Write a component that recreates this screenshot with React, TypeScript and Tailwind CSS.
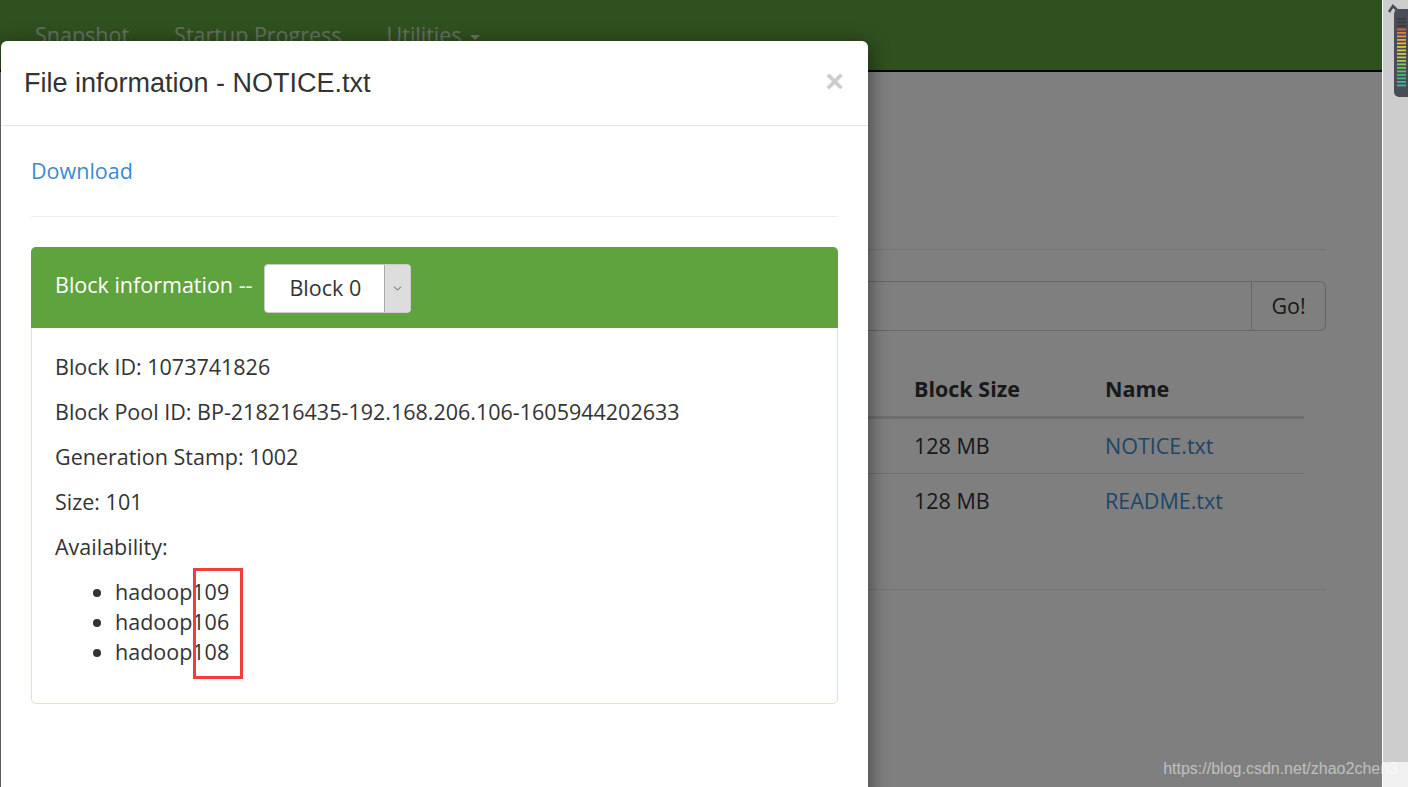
import { ChevronDown } from "lucide-react";

const bodyFont = { fontFamily: '"Open Sans", "Noto Sans", sans-serif' };
const arial = { fontFamily: '"Liberation Sans", Arial, sans-serif' };

function MeterWidget() {
  const colors = [
    "#3a3d45", "#3a3d45", "#3a3d45", "#e0643c", "#e57b3a", "#e8953a", "#e9a83a",
    "#e7b93c", "#e3c43f", "#d8cb42", "#c9cd45", "#b5cd4a", "#9fca50", "#89c657",
    "#72c25f", "#5dbd6a", "#4bb979", "#41b689", "#3eb398", "#3fb1a6",
  ];
  return (
    <svg width="26" height="100" viewBox="0 0 26 100" className="absolute left-0 top-0">
      <path d="M6 12 L10 6 L14 10" stroke="#4a4d57" strokeWidth="2.5" fill="none" />
      <rect x="11" y="9" width="20" height="88" rx="5" fill="#4a4d57" />
      {colors.map((c, i) => (
        <rect key={i} x="14" y={18 + i * 3.5} width="9" height="1.8" fill={c} />
      ))}
    </svg>
  );
}

function BackgroundPage() {
  return (
    <div className="relative flex-1 bg-white" style={bodyFont}>
      <div className="h-[72px] bg-[#5ea03f] border-b-2 border-black flex items-center gap-[45px] pl-[35px] text-[21.5px] text-white/70">
        <span>Snapshot</span>
        <span>Startup Progress</span>
        <span className="flex items-center gap-2">
          Utilities
          <span className="inline-block w-0 h-0 border-x-[5px] border-x-transparent border-t-[5px] border-t-white/70 mt-1" />
        </span>
      </div>
      <div className="ml-[56px] w-[1270px]">
        <div className="h-[178px] border-b border-[#e5e5e5]" />
        <div className="mt-[31px] flex h-[50px]">
          <div className="flex-1 border border-[#ccc] rounded-l-md" />
          <button className="w-[74px] border border-l-0 border-[#ccc] rounded-r-md text-[21.5px] text-[#333]">Go!</button>
        </div>
        <div className="w-[1248px] mt-[38px] text-[21.5px] text-[#333]">
          <div className="flex h-[50px] items-center pb-[6px] font-bold border-b-[3px] border-[#ddd]">
            <div className="w-[858px]" />
            <div className="w-[191px]">Block Size</div>
            <div>Name</div>
          </div>
          <div className="flex h-[55px] items-center border-b border-[#ddd]">
            <div className="w-[858px]" />
            <div className="w-[191px]">128 MB</div>
            <div className="text-[#3d8cd0]">NOTICE.txt</div>
          </div>
          <div className="flex h-[55px] items-center">
            <div className="w-[858px]" />
            <div className="w-[191px]">128 MB</div>
            <div className="text-[#3d8cd0]">README.txt</div>
          </div>
        </div>
        <div className="mt-[60px] border-t border-[#e5e5e5]" />
      </div>
      <div className="absolute inset-0 bg-black/50" />
    </div>
  );
}

function Modal() {
  return (
    <div
      className="absolute left-[1px] top-[41px] w-[867px] h-[800px] bg-white rounded-t-[6px] shadow-[0_5px_20px_rgba(0,0,0,0.55)]"
      style={bodyFont}
    >
      <div className="h-[85px] border-b border-[#e5e5e5] flex items-center justify-between pl-[23px] pr-[24px]">
        <h4 className="text-[27px] text-[#333] leading-none" style={arial}>
          File information - NOTICE.txt
        </h4>
        <span className="text-[32px] font-bold text-[#cccccc] leading-none pb-[4px]" style={arial}>
          ×
        </span>
      </div>
      <div className="px-[30px] pt-[30px]">
        <a className="block text-[21.5px] text-[#3a8ad0] leading-[30px]">Download</a>
        <div className="mt-[30px] border-t border-[#eee]" />
        <div className="mt-[30px] rounded-[5px] border border-[#d6e9c6]">
          <div className="h-[81px] -mx-px -mt-px bg-[#5fa33e] rounded-t-[5px] flex items-center pl-[24px] text-[21.5px] text-white">
            <span className="pb-[4px]">Block information --</span>
            <div className="ml-[12px] mt-[2px] flex h-[49px] w-[147px] rounded-[4px] border border-[#ccc] bg-white overflow-hidden">
              <div className="flex-1 flex items-center pl-[24px] text-[#333]">Block 0</div>
              <div className="w-[26px] bg-[#dddddd] border-l border-[#aaa] flex items-center justify-center">
                <ChevronDown size={13} strokeWidth={1.6} className="text-[#444]" />
              </div>
            </div>
          </div>
          <div className="px-[23px] pt-[24px] pb-[36px] text-[21.5px] text-[#333] leading-[30px]">
            <p>Block ID: 1073741826</p>
            <p className="mt-[15px]">Block Pool ID: BP-218216435-192.168.206.106-1605944202633</p>
            <p className="mt-[15px]">Generation Stamp: 1002</p>
            <p className="mt-[15px]">Size: 101</p>
            <p className="mt-[15px]">Availability:</p>
            <div className="relative mt-[15px]">
              <ul className="list-disc pl-[60px] marker:text-[#333]">
                <li>hadoop109</li>
                <li>hadoop106</li>
                <li>hadoop108</li>
              </ul>
              <div className="absolute left-[138px] top-[-9px] w-[50px] h-[111px] border-[3px] border-[#f33c3c]" />
            </div>
          </div>
        </div>
      </div>
    </div>
  );
}

export default function App() {
  return (
    <div className="relative flex h-[787px] w-full overflow-hidden">
      <BackgroundPage />
      <div className="relative w-[26px] border-l border-white flex flex-col">
        <div className="flex-1 bg-[#cdcdcd]" />
        <div className="h-[25px] bg-[#f0f0f0]" />
        <MeterWidget />
      </div>
      <Modal />
      <div className="absolute right-[10px] bottom-[6px] text-[16px] text-white/50" style={arial}>
        https://blog.csdn.net/zhao2chen3
      </div>
    </div>
  );
}
